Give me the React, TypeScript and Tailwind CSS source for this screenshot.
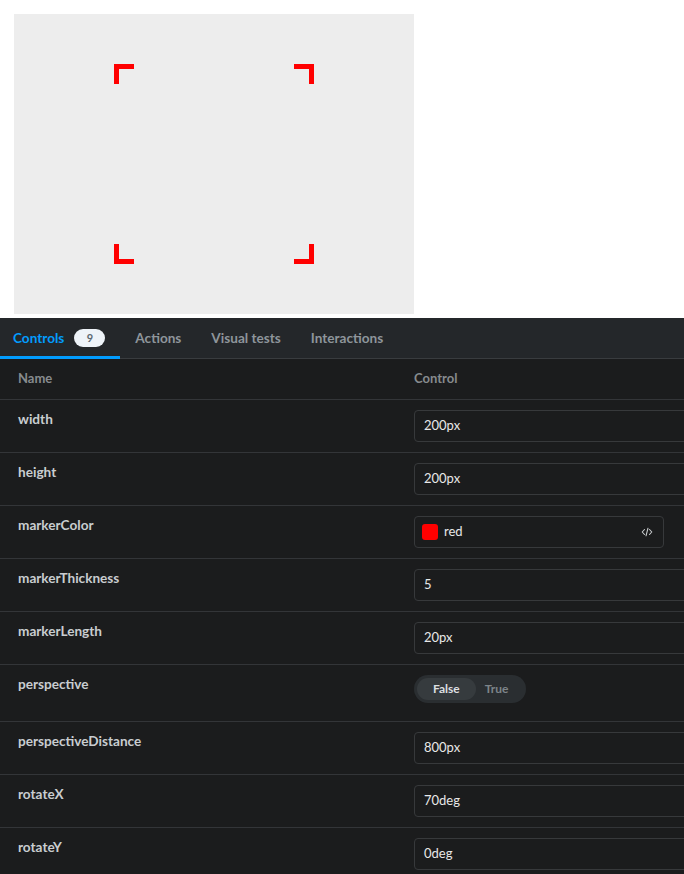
const rows: { name: string; kind: 'text' | 'color' | 'bool'; value?: string }[] = [
  { name: 'width', kind: 'text', value: '200px' },
  { name: 'height', kind: 'text', value: '200px' },
  { name: 'markerColor', kind: 'color', value: 'red' },
  { name: 'markerThickness', kind: 'text', value: '5' },
  { name: 'markerLength', kind: 'text', value: '20px' },
  { name: 'perspective', kind: 'bool' },
  { name: 'perspectiveDistance', kind: 'text', value: '800px' },
  { name: 'rotateX', kind: 'text', value: '70deg' },
  { name: 'rotateY', kind: 'text', value: '0deg' },
];

function Preview() {
  return (
    <div className="bg-white pt-[14px] pl-[14px] pb-[4px]">
      <div className="w-[400px] h-[300px] bg-[#ededed] flex items-center justify-center">
        <div className="relative w-[200px] h-[200px]">
          <div className="absolute top-0 left-0 w-5 h-5 border-t-[5px] border-l-[5px] border-[#ff0000]" />
          <div className="absolute top-0 right-0 w-5 h-5 border-t-[5px] border-r-[5px] border-[#ff0000]" />
          <div className="absolute bottom-0 left-0 w-5 h-5 border-b-[5px] border-l-[5px] border-[#ff0000]" />
          <div className="absolute bottom-0 right-0 w-5 h-5 border-b-[5px] border-r-[5px] border-[#ff0000]" />
        </div>
      </div>
    </div>
  );
}

function Tabs() {
  return (
    <div className="flex h-[41px] bg-[#24272a] border-b border-[#393c3f] text-[13.6px] font-bold">
      <div className="relative flex items-center gap-[10px] pl-[13px] pr-[15px] text-[#029cfd]">
        Controls
        <span className="flex items-center justify-center w-[31px] h-[18px] rounded-full bg-[#eef3f8] text-[#5c6870] text-[11px]">
          9
        </span>
        <div className="absolute left-0 right-0 bottom-[-1px] h-[3px] bg-[#029cfd]" />
      </div>
      {['Actions', 'Visual tests', 'Interactions'].map(t => (
        <div key={t} className="flex items-center px-[15px] text-[#8e959b]">
          {t}
        </div>
      ))}
    </div>
  );
}

function CodeIcon() {
  return (
    <svg width="12" height="12" viewBox="0 0 12 12" fill="none" stroke="#c9ccce" strokeWidth="1.1" strokeLinecap="round" strokeLinejoin="round">
      <path d="M3.5 3.5 1.2 6l2.3 2.5" />
      <path d="M8.5 3.5 10.8 6 8.5 8.5" />
      <path d="M7 2.2 5 9.8" />
    </svg>
  );
}

function Control({ row }: { row: (typeof rows)[number] }) {
  if (row.kind === 'bool') {
    return (
      <div className="flex w-fit h-[28px] rounded-full bg-[#2a2e31] p-[3px] text-[12px] font-bold">
        <span className="flex items-center px-[16px] rounded-full bg-[#363b3e] text-[#dcdfe1]">False</span>
        <span className="flex items-center pl-[9px] pr-[15px] text-[#7d8489]">True</span>
      </div>
    );
  }
  if (row.kind === 'color') {
    return (
      <div className="flex items-center w-[250px] h-[32px] rounded-[4px] border border-[#37393b] pl-[7px] pr-[10px] text-[13px] text-[#e8e8e8]">
        <span className="w-[16px] h-[16px] rounded-[3px] bg-[#ff0000] mr-[6px]" />
        <span className="flex-1">{row.value}</span>
        <CodeIcon />
      </div>
    );
  }
  return (
    <div className="flex items-center w-[320px] h-[32px] rounded-[4px] border border-[#37393b] pl-[9px] text-[13px] text-[#e8e8e8]">
      {row.value}
    </div>
  );
}

export default function App() {
  return (
    <div className="w-[684px] h-[874px] overflow-hidden bg-white" style={{ fontFamily: 'Lato, "Noto Sans", sans-serif' }}>
      <Preview />
      <div className="bg-[#1b1c1d]">
        <Tabs />
        <div className="flex h-[41px] border-b border-[#333538] text-[13px] font-bold text-[#878b8e]">
          <div className="w-[396px] pl-[18px] flex items-center">Name</div>
          <div className="pl-[18px] flex items-center">Control</div>
        </div>
        {rows.map(r => (
          <div key={r.name} className={`flex border-b border-[#333538] pt-[10px] ${r.kind === 'bool' ? 'h-[57px]' : 'h-[53px]'}`}>
            <div className="w-[396px] pl-[18px] text-[13.6px] font-bold text-[#c9cdd0] leading-[18px]">{r.name}</div>
            <div className="pl-[18px] flex-1 min-w-0">
              <Control row={r} />
            </div>
          </div>
        ))}
      </div>
    </div>
  );
}
